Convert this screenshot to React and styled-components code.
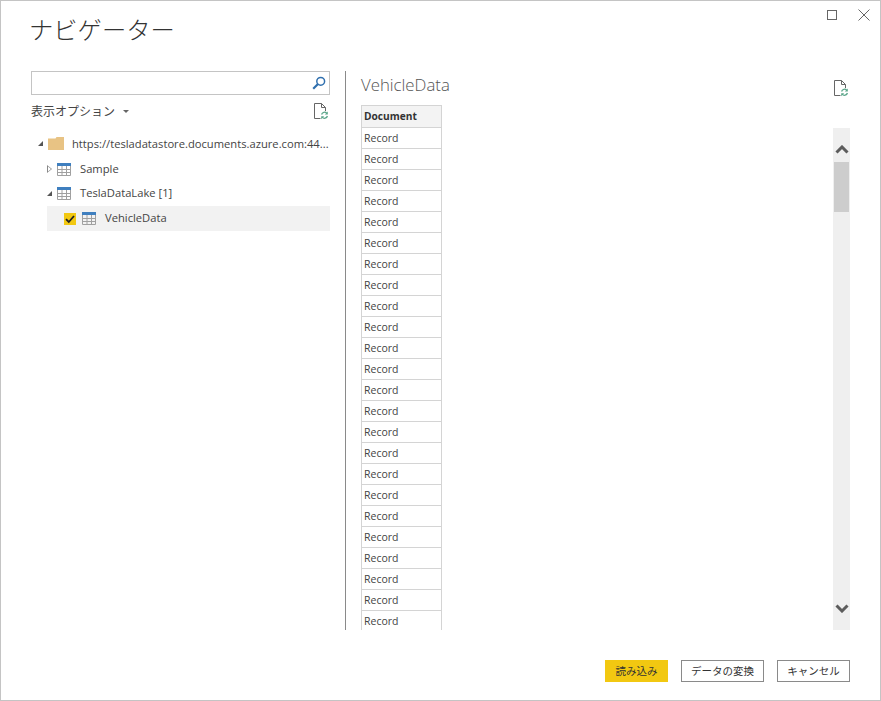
import React from 'react';
import styled, { createGlobalStyle } from 'styled-components';

const GlobalStyle = createGlobalStyle`
  html, body {
    margin: 0;
    padding: 0;
    background: #fff;
  }
  * {
    box-sizing: border-box;
  }
`;

const FONT = `"Open Sans", "Noto Sans CJK JP", sans-serif`;

const records = Array.from({ length: 24 }, (_, i) => i);

function TableIcon() {
  return (
    <TableSvg viewBox="0 0 14 13" width="14" height="13">
      <rect x="0" y="0" width="14" height="3" fill="#3f7fbf" />
      <path
        d="M.5 3v9.5h13V3M.5 6.5h13M.5 9.5h13M5 3v9.5M9.5 3v9.5"
        fill="none"
        stroke="#a0a0a0"
        strokeWidth="1"
      />
    </TableSvg>
  );
}

function RefreshDoc() {
  return (
    <svg viewBox="0 0 16 17" width="16" height="17">
      <path
        d="M7.5 15.5H1.5V.5H8.5L12.5 4.5V8M8.5.5V4.5H12.5"
        fill="none"
        stroke="#666"
        strokeWidth="1"
      />
      <path
        d="M8.6 11.5a3 3 0 0 1 5.2-1.2M14.4 13a3 3 0 0 1-5.2 1.2"
        fill="none"
        stroke="#5aa589"
        strokeWidth="1.3"
      />
      <path d="M14.8 8.6v3h-3zM8.2 16.2v-3h3z" fill="#5aa589" />
    </svg>
  );
}

function Chevron({ down }) {
  return (
    <svg viewBox="0 0 14 9" width="14" height="9">
      <path
        d={down ? 'M1.5 1.5L7 7l5.5-5.5' : 'M1.5 7.5L7 2l5.5 5.5'}
        fill="none"
        stroke="#5c5c5c"
        strokeWidth="3"
      />
    </svg>
  );
}

export default function App() {
  return (
    <Dialog>
      <GlobalStyle />
      <WindowButtons>
        <svg viewBox="0 0 10 10" width="10" height="10">
          <rect x=".5" y=".5" width="9" height="9" fill="none" stroke="#666" />
        </svg>
        <svg viewBox="0 0 12 12" width="12" height="12">
          <path d="M.5.5l11 11M11.5.5l-11 11" fill="none" stroke="#666" />
        </svg>
      </WindowButtons>
      <Title>ナビゲーター</Title>
      <Body>
        <LeftPane>
          <SearchBox>
            <svg viewBox="0 0 14 14" width="14" height="14">
              <circle cx="8.7" cy="5.3" r="3.9" fill="none" stroke="#2f6fae" strokeWidth="1.5" />
              <path d="M6 8L1.2 12.8" stroke="#2f6fae" strokeWidth="2.2" />
            </svg>
          </SearchBox>
          <OptionsRow>
            <OptionsLabel>
              表示オプション
              <Caret />
            </OptionsLabel>
            <RefreshDoc />
          </OptionsRow>
          <Tree>
            <TreeRow $height={27} $indent={7}>
              <ExpandedArrow />
              <FolderIcon viewBox="0 0 16 13" width="16" height="13">
                <path d="M0 1.5h7.5l1-1.5H16V13H0z" fill="#e8c384" />
              </FolderIcon>
              <RootLabel>https://tesladatastore.documents.azure.com:44...</RootLabel>
            </TreeRow>
            <TreeRow $height={24} $indent={16}>
              <CollapsedArrow />
              <TableIcon />
              <NodeLabel>Sample</NodeLabel>
            </TreeRow>
            <TreeRow $height={25} $indent={16}>
              <ExpandedArrow />
              <TableIcon />
              <NodeLabel>TeslaDataLake [1]</NodeLabel>
            </TreeRow>
            <SelectedRow>
              <CheckBox>
                <svg viewBox="0 0 12 12" width="12" height="12">
                  <path d="M2 6.2l2.8 2.8L10 3" fill="none" stroke="#222" strokeWidth="1.8" />
                </svg>
              </CheckBox>
              <TableIcon />
              <NodeLabel>VehicleData</NodeLabel>
            </SelectedRow>
          </Tree>
        </LeftPane>
        <PreviewPane>
          <PreviewHeader>
            <PreviewTitle>VehicleData</PreviewTitle>
            <RefreshDoc />
          </PreviewHeader>
          <PreviewBody>
            <DataTable>
              <HeaderCell>Document</HeaderCell>
              {records.map(i => (
                <Cell key={i}>Record</Cell>
              ))}
            </DataTable>
            <ScrollBar>
              <ScrollButton $top>
                <Chevron />
              </ScrollButton>
              <ScrollThumb />
              <ScrollSpacer />
              <ScrollButton>
                <Chevron down />
              </ScrollButton>
            </ScrollBar>
          </PreviewBody>
        </PreviewPane>
      </Body>
      <Footer>
        <PrimaryButton>読み込み</PrimaryButton>
        <OutlineButton $width={83}>データの変換</OutlineButton>
        <OutlineButton $width={73}>キャンセル</OutlineButton>
      </Footer>
    </Dialog>
  );
}

const Dialog = styled.div`
  position: relative;
  width: 881px;
  height: 701px;
  border: 1px solid #c4c4c4;
  padding: 0 30px 0 30px;
  font-family: ${FONT};
  color: #333;
  overflow: hidden;
  background: #fff;
`;

const WindowButtons = styled.div`
  position: absolute;
  top: 8px;
  right: 10px;
  display: flex;
  align-items: center;
  gap: 21px;
`;

const Title = styled.h1`
  margin: 0 0 0 -2px;
  height: 70px;
  padding-top: 10px;
  font-size: 24.3px;
  line-height: 38px;
  font-weight: 300;
  color: #333;
`;

const Body = styled.div`
  display: flex;
  height: 559px;
`;

const LeftPane = styled.div`
  width: 299px;
  flex: none;
`;

const SearchBox = styled.div`
  height: 24px;
  border: 1px solid #c4c4c4;
  display: flex;
  align-items: center;
  justify-content: flex-end;
  padding-right: 3px;
`;

const OptionsRow = styled.div`
  height: 32px;
  display: flex;
  align-items: center;
  justify-content: space-between;
  padding-right: 1px;
`;

const OptionsLabel = styled.div`
  display: flex;
  align-items: center;
  font-size: 12px;
  color: #444;
`;

const Caret = styled.span`
  margin-left: 8px;
  width: 0;
  height: 0;
  border-left: 3px solid transparent;
  border-right: 3px solid transparent;
  border-top: 3px solid #666;
`;

const Tree = styled.div`
  padding-top: 3px;
`;

const TreeRow = styled.div`
  height: ${p => p.$height}px;
  padding-left: ${p => p.$indent}px;
  display: flex;
  align-items: center;
  white-space: nowrap;
`;

const ExpandedArrow = styled.span`
  width: 0;
  height: 0;
  flex: none;
  margin-right: 5px;
  border-left: 5px solid transparent;
  border-bottom: 5px solid #555;
`;

const CollapsedArrow = styled.span`
  width: 5px;
  height: 8px;
  flex: none;
  margin-right: 5px;
  background: #888;
  clip-path: polygon(0 0, 100% 50%, 0 100%, 0 0, 20% 20%, 20% 80%, 80% 50%, 20% 20%);
`;

const FolderIcon = styled.svg`
  flex: none;
`;

const TableSvg = styled.svg`
  flex: none;
`;

const RootLabel = styled.span`
  margin-left: 8px;
  padding-bottom: 1px;
  font-size: 11.2px;
  color: #444;
`;

const NodeLabel = styled.span`
  margin-left: 9px;
  padding-bottom: 2px;
  font-size: 11.2px;
  color: #444;
`;

const SelectedRow = styled.div`
  margin-left: 16px;
  height: 25px;
  background: #f2f2f2;
  display: flex;
  align-items: center;
  padding-left: 17px;
  gap: 6px;

  ${NodeLabel} {
    margin-left: 3px;
  }
`;

const CheckBox = styled.span`
  width: 12px;
  height: 12px;
  flex: none;
  background: #f2c811;
  display: flex;
`;

const PreviewPane = styled.div`
  width: 505px;
  margin-left: 15px;
  flex: none;
  border-left: 1px solid #8a8a8a;
  padding-left: 15px;
  display: flex;
  flex-direction: column;
`;

const PreviewHeader = styled.div`
  height: 34px;
  display: flex;
  align-items: center;
  justify-content: space-between;
  padding: 0 1px 0 0;
`;

const PreviewTitle = styled.div`
  padding-bottom: 8px;
  font-size: 16.8px;
  font-weight: 300;
  color: #555;
`;

const PreviewBody = styled.div`
  flex: 1;
  min-height: 0;
  display: flex;
  justify-content: space-between;
  overflow: hidden;
`;

const DataTable = styled.div`
  width: 81px;
  border: 1px solid #d4d4d4;
  border-bottom: none;
  align-self: flex-start;
`;

const HeaderCell = styled.div`
  height: 22px;
  line-height: 20px;
  padding-left: 2px;
  font-size: 10.2px;
  font-weight: 700;
  background: #f3f3f3;
  border-bottom: 1px solid #d4d4d4;
`;

const Cell = styled.div`
  height: 21px;
  line-height: 20px;
  padding-left: 2px;
  font-size: 10.5px;
  color: #444;
  border-bottom: 1px solid #d4d4d4;
`;

const ScrollBar = styled.div`
  width: 17px;
  margin-top: 23px;
  background: #efefef;
  display: flex;
  flex-direction: column;
  align-items: center;
`;

const ScrollButton = styled.div`
  height: 34px;
  flex: none;
  display: flex;
  align-items: center;
  justify-content: center;
  padding: ${p => (p.$top ? '8px 0 0' : '0 0 10px')};
`;

const ScrollThumb = styled.div`
  width: 15px;
  height: 50px;
  flex: none;
  background: #cdcdcd;
`;

const ScrollSpacer = styled.div`
  flex: 1;
`;

const Footer = styled.div`
  height: 70px;
  display: flex;
  align-items: flex-start;
  justify-content: flex-end;
  gap: 13px;
  padding-top: 30px;
`;

const PrimaryButton = styled.button`
  width: 63px;
  height: 22px;
  padding: 0 0 2px;
  border: none;
  background: #f2c811;
  color: #333;
  font-family: ${FONT};
  font-size: 10.5px;
`;

const OutlineButton = styled.button`
  width: ${p => p.$width}px;
  height: 22px;
  padding: 0 0 2px;
  border: 1px solid #8a8a8a;
  background: #fff;
  color: #333;
  font-family: ${FONT};
  font-size: 10.5px;
`;
